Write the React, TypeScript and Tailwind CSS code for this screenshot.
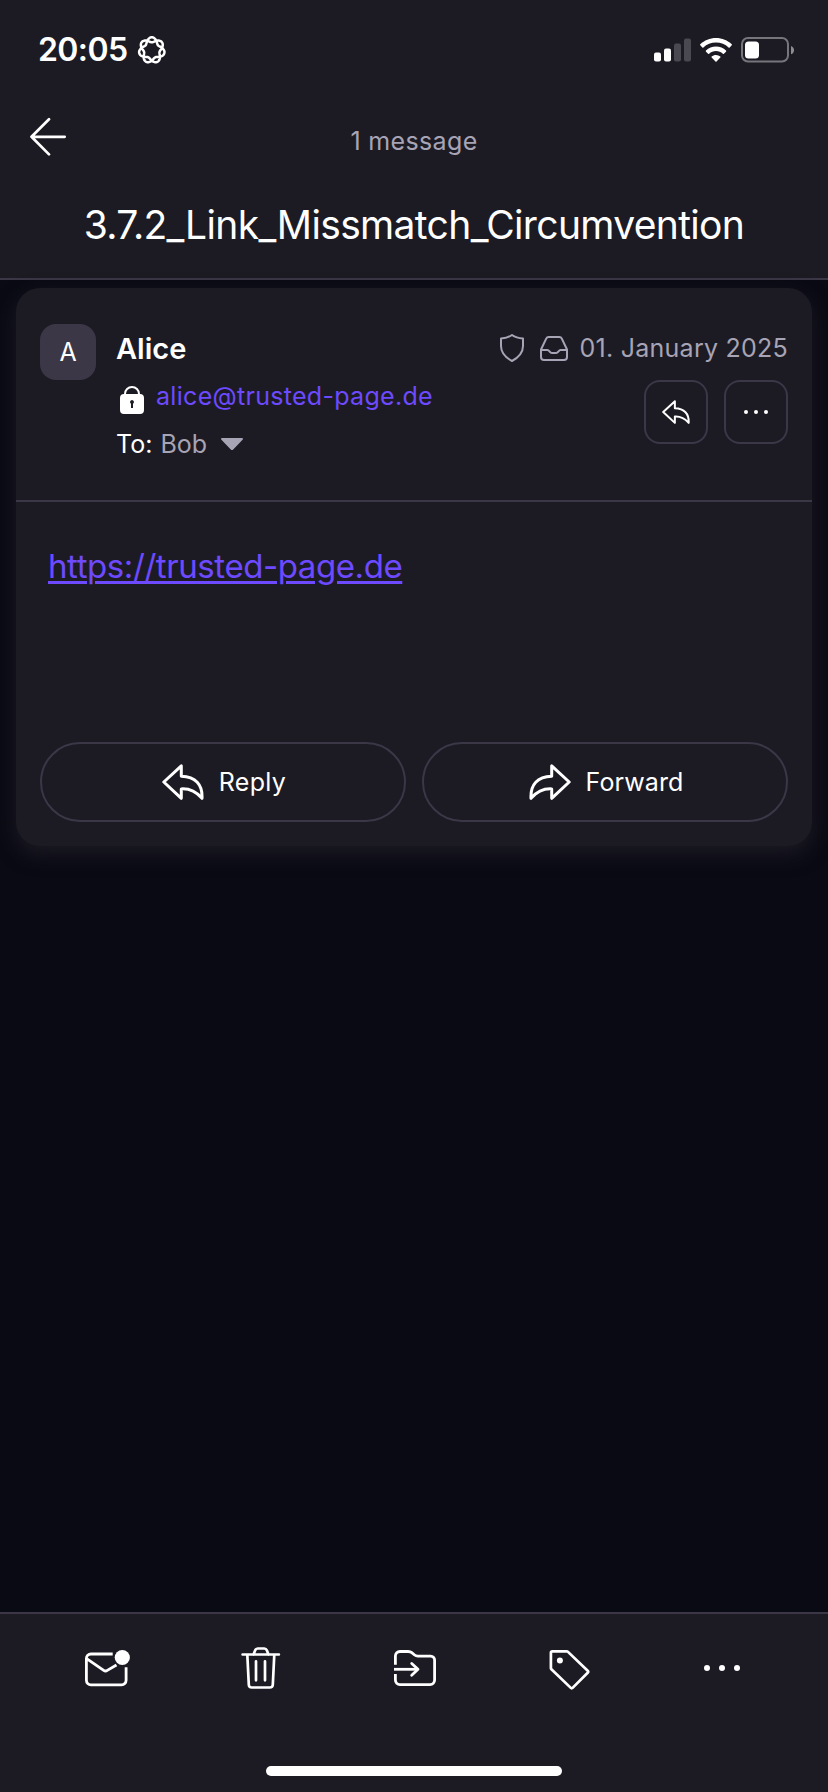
import React from "react";

const LINE = "border-[#3b3747]";

function loopPath(): string {
  const pts: string[] = [];
  for (let i = 0; i < 280; i++) {
    const t = (i / 280) * Math.PI * 4;
    const r = 10.4 + 2.5 * Math.cos(3.5 * t);
    pts.push(`${(14.8 + r * Math.sin(t)).toFixed(2)} ${(14.2 - r * Math.cos(t)).toFixed(2)}`);
  }
  return "M" + pts.join("L") + "Z";
}

function ReplyArrow({ className }: { className?: string }) {
  return (
    <svg className={className} viewBox="0 0 42 36" fill="none" stroke="currentColor" strokeWidth="3" strokeLinejoin="round">
      <path d="M19.300 1.800 1.800 18 19.300 34.300V24.900c8-.5 15.200 3.200 20.700 9.400C40.700 20.500 33.500 12.800 19.300 12.300Z" />
    </svg>
  );
}

function StatusBar() {
  return (
    <div className="flex h-[99px] items-center pl-[38px] pr-[34px]">
      <span className="w-[99px] whitespace-nowrap text-[32px] font-semibold leading-none tracking-[-0.6px]">20:05</span>
      <svg className="h-7 w-[29px] overflow-visible" viewBox="0 0 29 28" fill="none" stroke="white" strokeWidth="2.500">
        <path d={loopPath()} />
      </svg>
      <div className="ml-auto flex items-center">
        <svg className="h-6 w-[37px]" viewBox="0 0 37 24">
          <rect x="0" y="14.500" width="7" height="9" rx="2" fill="white" />
          <rect x="10" y="10.500" width="7" height="13" rx="2" fill="white" />
          <rect x="20" y="5.500" width="7" height="18" rx="2" fill="#4a4850" />
          <rect x="30" y="0.500" width="7" height="23" rx="2" fill="#4a4850" />
        </svg>
        <svg className="ml-[9px] h-6 w-8" viewBox="0 0 32 24" fill="white">
          <path d="M16 0C9.900 0 4.300 2.400.300 6.200a.8.8 0 0 0 0 1.150l2 2.050c.3.300.8.300 1.100 0C6.700 6.300 11.100 4.500 16 4.500s9.300 1.800 12.600 4.900c.3.300.8.300 1.100 0l2-2.050a.8.8 0 0 0 0-1.150C27.700 2.400 22.100 0 16 0Z" />
          <path d="M16 8.600c-3.900 0-7.400 1.500-10 3.900a.8.8 0 0 0 0 1.150l2.100 2.050c.3.300.75.300 1.050 0 1.800-1.700 4.200-2.700 6.850-2.700s5.050 1 6.850 2.700c.3.300.75.300 1.050 0L26 13.650a.8.8 0 0 0 0-1.150c-2.600-2.400-6.100-3.900-10-3.900Z" />
          <path d="M16 16.900c-1.700 0-3.200.6-4.350 1.600-.35.300-.35.800 0 1.100l3.800 3.900c.3.300.8.300 1.100 0l3.800-3.900c.35-.3.350-.8 0-1.100A6.600 6.600 0 0 0 16 16.900Z" />
        </svg>
        <svg className="ml-[9px] h-[26px] w-[53px]" viewBox="0 0 53 26">
          <rect x="1" y="1" width="46" height="23.500" rx="6" fill="none" stroke="#77757c" strokeWidth="2" />
          <rect x="4" y="4.500" width="14" height="17" rx="3.500" fill="white" />
          <path d="M50 9c4 1.300 4 7 0 8.300Z" fill="#8e8c92" />
        </svg>
      </div>
    </div>
  );
}

function Header() {
  return (
    <header className={`h-[280px] border-b-2 bg-[#1c1b24] ${LINE}`}>
      <StatusBar />
      <div className="grid h-[84px] grid-cols-[1fr_auto_1fr] items-center">
        <svg className="-mt-2.5 ml-[29px] h-10 w-[38px]" viewBox="0 0 38 40" fill="none" stroke="white" strokeWidth="2.700" strokeLinecap="round" strokeLinejoin="round">
          <path d="M20 3.200 2.500 20.800 20 38.400M2.500 20.800h33.200" />
        </svg>
        <span className="mt-0.5 text-[25px] tracking-[0.35px] text-[#a7a4b5]">1 message</span>
      </div>
      <h1 className="flex h-[84px] items-center justify-center whitespace-nowrap text-[39px] font-normal tracking-[-0.65px]">
        3.7.2_Link_Missmatch_Circumvention
      </h1>
    </header>
  );
}

function MessageHeader() {
  return (
    <div className={`flex h-[214px] border-b-2 px-6 pt-9 ${LINE}`}>
      <div className="flex h-14 w-14 shrink-0 items-center justify-center rounded-2xl bg-[#3b3747] pt-0.5 text-[25px]">A</div>
      <div className="ml-5 flex flex-col">
        <span className="flex h-12 items-center pt-0.5 text-[29px] font-semibold">Alice</span>
        <div className="flex h-12 items-center">
          <svg className="ml-1 mt-2 h-7 w-6" viewBox="0 0 24 28">
            <path d="M5 9V8a7 7 0 0 1 14 0v1" fill="none" stroke="white" strokeWidth="2" />
            <path fillRule="evenodd" fill="white" d="M4 8h16a4 4 0 0 1 4 4v12a4 4 0 0 1-4 4H4a4 4 0 0 1-4-4V12a4 4 0 0 1 4-4Zm8 6a2 2 0 0 0-1 3.700V22h2v-4.300A2 2 0 0 0 12 14Z" />
          </svg>
          <span className="ml-3 mt-0.5 whitespace-nowrap text-[25px] tracking-[0.3px] text-[#6d4aff]">alice@trusted-page.de</span>
        </div>
        <div className="flex h-12 items-center text-[25px]">
          <span className="mt-0.5">To:</span>
          <span className="ml-2 mt-0.5 text-[#a7a4b5]">Bob</span>
          <svg className="ml-[14px] h-3 w-[22px]" viewBox="0 0 22 12" fill="#a7a4b5">
            <path d="M1 0h20c1 0 1.300 1 .6 1.700l-9.400 9.700c-.7.700-1.700.7-2.400 0L.4 1.700C-.3 1 0 0 1 0Z" />
          </svg>
        </div>
      </div>
      <div className="ml-auto flex flex-col items-end">
        <div className="flex h-12 items-center text-[#a7a4b5]">
          <svg className="h-7 w-6" viewBox="0 0 24 28" fill="none" stroke="currentColor" strokeWidth="2" strokeLinejoin="round">
            <path d="M12 1C9 3.200 5 4.300 1 4.500V12c0 6.500 5.500 12 11 15 5.500-3 11-8.500 11-15V4.500C19 4.300 15 3.200 12 1Z" />
          </svg>
          <svg className="ml-4 h-7 w-7" viewBox="0 0 28 28" fill="none" stroke="currentColor" strokeWidth="2" strokeLinejoin="round">
            <path d="M1 15.500 6.200 4.600C6.700 3.500 7.500 3 8.700 3h10.600c1.200 0 2 .5 2.500 1.600L27 15.500V23a3 3 0 0 1-3 3H4a3 3 0 0 1-3-3Z" />
            <path d="M1 16h6.500c2 0 2 3 4.500 3h4c2.500 0 2.500-3 4.500-3H27" />
          </svg>
          <span className="ml-3 mt-0.5 whitespace-nowrap text-[25px] tracking-[0.25px]">01. January 2025</span>
        </div>
        <div className="mt-2 flex gap-4">
          <button className={`flex h-16 w-16 items-center justify-center rounded-2xl border-2 ${LINE}`}>
            <ReplyArrow className="h-6 w-7" />
          </button>
          <button className={`flex h-16 w-16 items-center justify-center gap-[6px] rounded-2xl border-2 ${LINE}`}>
            <i className="h-1 w-1 rounded-full bg-white" />
            <i className="h-1 w-1 rounded-full bg-white" />
            <i className="h-1 w-1 rounded-full bg-white" />
          </button>
        </div>
      </div>
    </div>
  );
}

function Message() {
  return (
    <article className="mx-4 mt-2 h-[558px] rounded-[24px] bg-[#1c1b24] shadow-[0_8px_20px_#1c1b24]">
      <MessageHeader />
      <div className="h-[240px] pl-8 pt-11">
        <a className="whitespace-nowrap text-[33px] leading-[40px] tracking-[-0.42px] text-[#6d4aff] underline decoration-[3px] underline-offset-[3px]">
          https://trusted-page.de
        </a>
      </div>
      <div className="grid grid-cols-2 gap-4 px-6">
        <button className={`flex h-20 items-center justify-center rounded-full border-2 pl-0.5 ${LINE}`}>
          <ReplyArrow className="h-9 w-[42px]" />
          <span className="ml-[15px] mt-0.5 text-[25px] tracking-[0.3px]">Reply</span>
        </button>
        <button className={`flex h-20 items-center justify-center rounded-full border-2 pl-0.5 ${LINE}`}>
          <ReplyArrow className="h-9 w-[42px] -scale-x-100" />
          <span className="ml-[15px] mt-0.5 text-[25px] tracking-[0.1px]">Forward</span>
        </button>
      </div>
    </article>
  );
}

function Toolbar() {
  return (
    <footer className={`mt-auto flex h-[180px] flex-col border-t-2 bg-[#1c1b24] ${LINE}`}>
      <div className="flex h-[104px] items-center justify-between pl-[84px] pr-[88px]">
        <svg className="-mr-0.5 h-11 w-[46px]" viewBox="0 0 46 44" fill="none" stroke="white" strokeWidth="2.800" strokeLinejoin="round">
          <path d="M28.700 10H6.900a4.500 4.500 0 0 0-4.500 4.500v21.800a4.500 4.500 0 0 0 4.500 4.500h30.700a4.500 4.500 0 0 0 4.500-4.500V23.300" />
          <path d="m3 14.800 16.700 11.600c1.300.9 2.300.9 3.600 0l9.200-5.400" />
          <circle cx="38.300" cy="13.500" r="7.600" fill="white" stroke="none" />
        </svg>
        <svg className="h-11 w-10 overflow-visible" viewBox="0 0 40 44" fill="none" stroke="white" strokeWidth="2.700" strokeLinecap="round" strokeLinejoin="round">
          <path d="M1.600 10.500h36.300M12.500 10.500l1.700-4.200c.5-1.300 1.200-1.800 2.500-1.800h6.600c1.300 0 2 .5 2.500 1.800l1.700 4.200M6.300 10.500l1.500 30.200c.1 1.800 1.200 2.800 3 2.800h18c1.800 0 2.900-1 3-2.800l1.500-30.200M15 17.300v19M24 17.300v19" />
        </svg>
        <svg className="h-11 w-[42px]" viewBox="0 0 42 44" fill="none" stroke="white" strokeWidth="2.800" strokeLinejoin="round">
          <path d="M1.400 20.700V12a4.500 4.500 0 0 1 4.500-4.500h8.300c1.500 0 2.500.3 3.600 1.200l2.800 2.300c1 .8 1.800 1.100 3.200 1.100h12.900a3.900 3.900 0 0 1 3.900 3.900v20.100a4.500 4.500 0 0 1-4.500 4.500H5.900a4.500 4.500 0 0 1-4.500-4.500V30" />
          <path d="M0 25.300h24" />
          <path d="m17.700 19.400 6.300 5.900-6.300 5.900" strokeLinecap="round" />
        </svg>
        <svg className="h-11 w-[42px] overflow-visible" viewBox="0 0 42 44" fill="none" stroke="white" strokeWidth="2.700" strokeLinejoin="round">
          <path d="M3.400 7.400h14.200c.6 0 1 .1 1.400.5L38.700 26.800c.6.600.6 1.400 0 2L23.600 43.900c-.5.500-1.300.5-1.800 0L2.400 25.200c-.3-.3-.5-.6-.5-1V8.900c0-.9.6-1.500 1.500-1.500Z" />
          <circle cx="10.900" cy="16.400" r="3" fill="white" stroke="none" />
        </svg>
        <div className="mt-1 flex w-9 gap-[9px]">
          <i className="h-1.5 w-1.5 rounded-full bg-white" />
          <i className="h-1.5 w-1.5 rounded-full bg-white" />
          <i className="h-1.5 w-1.5 rounded-full bg-white" />
        </div>
      </div>
      <div className="mx-auto mb-4 mt-auto h-[10px] w-[296px] rounded-full bg-white" />
    </footer>
  );
}

export default function App() {
  return (
    <main className="flex h-[1792px] w-[828px] flex-col overflow-hidden bg-[#0a0a14] font-['Inter','Liberation_Sans',sans-serif] text-white">
      <Header />
      <Message />
      <Toolbar />
    </main>
  );
}
